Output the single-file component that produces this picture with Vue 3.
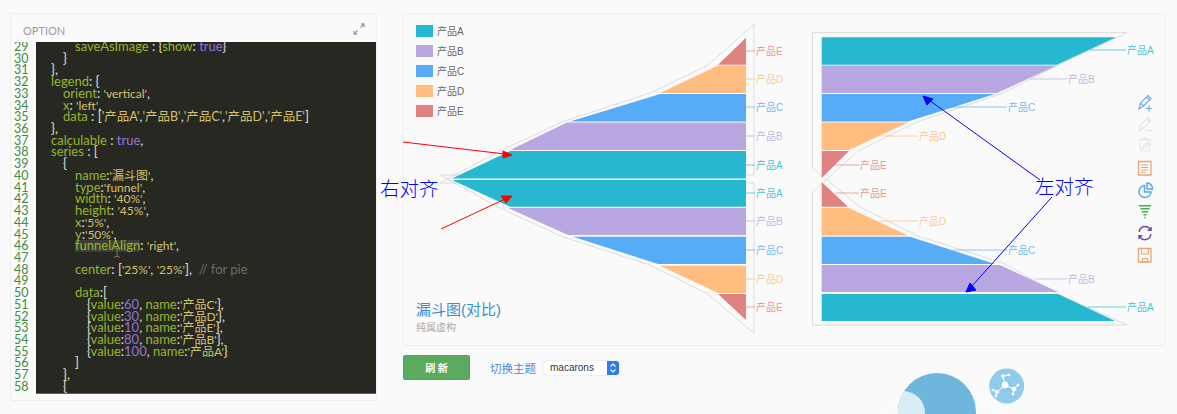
<script setup>
const kw = 'k', st = 's', pu = 'p', co = 'c', cm = 'm', cj = 'z'
const t = (cls, text) => ({ cls, text })
const item = (num, name, end = '},') => [t(pu, '{'), t(kw, 'value'), t(pu, ':'), t(co, num), t(pu, ', '), t(kw, 'name'), t(pu, ':'), t(st, `'${name}'`), t(pu, end)]
const codeLines = [
  [3, t(kw, 'saveAsImage'), t(pu, ' : {'), t(kw, 'show'), t(pu, ': '), t(co, 'true'), t(pu, '}')],
  [2, t(pu, '}')],
  [1, t(pu, '},')],
  [1, t(kw, 'legend'), t(pu, ': {')],
  [2, t(kw, 'orient'), t(pu, ': '), t(st, "'vertical'"), t(pu, ',')],
  [2, t(kw, 'x'), t(pu, ': '), t(st, "'left'"), t(pu, ',')],
  [2, t(kw, 'data'), t(pu, ' : ['), t(cj, "'产品A'"), t(pu, ','), t(cj, "'产品B'"), t(pu, ','), t(cj, "'产品C'"), t(pu, ','), t(cj, "'产品D'"), t(pu, ','), t(cj, "'产品E'"), t(pu, ']')],
  [1, t(pu, '},')],
  [1, t(kw, 'calculable'), t(pu, ' : '), t(co, 'true'), t(pu, ',')],
  [1, t(kw, 'series'), t(pu, ' : [')],
  [2, t(pu, '{')],
  [3, t(kw, 'name'), t(pu, ':'), t(st, "'漏斗图'"), t(pu, ',')],
  [3, t(kw, 'type'), t(pu, ':'), t(st, "'funnel'"), t(pu, ',')],
  [3, t(kw, 'width'), t(pu, ': '), t(st, "'40%'"), t(pu, ',')],
  [3, t(kw, 'height'), t(pu, ': '), t(st, "'45%'"), t(pu, ',')],
  [3, t(kw, 'x'), t(pu, ':'), t(st, "'5%'"), t(pu, ',')],
  [3, t(kw, 'y'), t(pu, ':'), t(st, "'50%'"), t(pu, ',')],
  [3, t('h', 'funnelAlign'), t(pu, ': '), t(st, "'right'"), t(pu, ',')],
  [3],
  [3, t(kw, 'center'), t(pu, ': ['), t(st, "'25%'"), t(pu, ', '), t(st, "'25%'"), t(pu, '],  '), t(cm, '// for pie')],
  [3],
  [3, t(kw, 'data'), t(pu, ':[')],
  [4, ...item('60', '产品C')],
  [4, ...item('30', '产品D')],
  [4, ...item('10', '产品E')],
  [4, ...item('80', '产品B')],
  [4, ...item('100', '产品A', '}')],
  [3, t(pu, ']')],
  [2, t(pu, '},')],
  [2, t(pu, '{')],
].map((l, i) => ({ n: 29 + i, indent: l[0], tokens: l.slice(1) }))

const A = '#26b8d0', B = '#b9a7e2', C = '#57acf7', D = '#ffbd80', E = '#e08280'
const legend = [['产品A', A], ['产品B', B], ['产品C', C], ['产品D', D], ['产品E', E]]
  .map(([name, color], i) => ({ name, color, y: 25 + i * 20 }))

const segments = [
  // right-aligned funnel
  [A, '510,151 746,151 746,178.5 452,178.5'],
  [B, '567,122.5 746,122.5 746,150 510,150'],
  [C, '660,94 746,94 746,121.5 570,121.5'],
  [D, '718,65.5 746,65.5 746,93 660,93'],
  [E, '746,37.7 746,64.7 718,64.7'],
  [A, '452,180 746,180 746,206.7 510,206.7'],
  [B, '508,208 746,208 746,235 568,235'],
  [C, '573,236.7 746,236.7 746,264 658,264'],
  [D, '660,265.7 746,265.7 746,293 718,293'],
  [E, '718,294 746,294 746,320'],
  // left-aligned funnel
  [A, '821.7,37.3 1116,37.3 1057,64.7 821.7,64.7'],
  [B, '821.7,65.5 1057,65.5 997,93 821.7,93'],
  [C, '821.7,94 995,94 908,121.5 821.7,121.5'],
  [D, '821.7,122.5 908,122.5 849,150 821.7,150'],
  [E, '821.7,151 849,151 821.7,178'],
  [E, '821.7,182 848,206.7 821.7,206.7'],
  [D, '821.7,208 849,208 908,235.5 821.7,235.5'],
  [C, '821.7,236.7 910,236.7 995,264 821.7,264'],
  [B, '821.7,265 1000,265 1058,292 821.7,292'],
  [A, '821.7,294 1058,294 1115,321 821.7,321'],
].map(([fill, points]) => ({ fill, points }))

const outlines = [
  '754,175 754,24 708,65 650,93 562,122 500,151 440,183 754,183',
  '754,183 754,333.5 708,294 650,265 562,236.5 500,208 440,175 754,175',
  '812.5,168 812.5,32.7 1127,32.7 1058,65 1003,93 917,122 858,151 812.5,192 812.5,325 1127,325 1058,294 1003,263 918,236 860,207 812.5,168',
]

const labels = [
  ['产品E', E, 746, 756, 51], ['产品D', D, 746, 756, 79], ['产品C', C, 746, 756, 107], ['产品B', B, 746, 756, 136], ['产品A', A, 746, 756, 165],
  ['产品A', A, 746, 756, 193], ['产品B', B, 746, 756, 221], ['产品C', C, 746, 756, 250], ['产品D', D, 746, 756, 279], ['产品E', E, 746, 756, 307],
  ['产品A', A, 1090, 1127, 50], ['产品B', B, 1030, 1068, 79], ['产品C', C, 950, 1008, 107], ['产品D', D, 880, 919, 136], ['产品E', E, 835, 860, 165],
  ['产品E', E, 835, 860, 193], ['产品D', D, 880, 919, 221], ['产品C', C, 953, 1008, 250], ['产品B', B, 1035, 1068, 279], ['产品A', A, 1088, 1127, 307],
].map(([name, color, x1, x2, y]) => ({ name, color, x1, x2, y }))
</script>

<template>
  <div class="page">
    <section class="option-card">
      <header class="option-head">
        <span class="option-title">OPTION</span>
        <svg class="expand" width="12" height="12" viewBox="0 0 12 12">
          <path d="M7.5 4.5 L11 1 M8 1 H11 V4 M4.5 7.5 L1 11 M1 8 V11 H4" fill="none" stroke="#a0a0a0" stroke-width="1.3" />
        </svg>
      </header>
      <div class="editor">
        <div class="gutter">
          <div v-for="l in codeLines" :key="l.n" class="num">{{ l.n }}</div>
        </div>
        <div class="code">
          <div v-for="l in codeLines" :key="l.n" class="line" :class="'lv' + l.indent">
            <span v-for="(tk, i) in l.tokens" :key="i" :class="tk.cls">{{ tk.text }}</span>
          </div>
          <svg class="cursor" width="8" height="11" viewBox="0 0 8 11">
            <path d="M1 1 H3 L4 2 L5 1 H7 M4 2 V9 M1 10 H3 L4 9 L5 10 H7" fill="none" stroke="#77776e" stroke-width="1" />
          </svg>
        </div>
      </div>
    </section>

    <div class="main">
      <section class="chart-card">
        <svg class="chart" width="762" height="333" viewBox="403 13 762 333">
          <polyline v-for="(o, i) in outlines" :key="i" :points="o" fill="none" stroke="#dcdcdc" stroke-width="1" />
          <polygon v-for="(s, i) in segments" :key="i" :points="s.points" :fill="s.fill" />
          <g v-for="(l, i) in labels" :key="i">
            <line :x1="l.x1" :x2="l.x2 - 1" :y1="l.y" :y2="l.y" :stroke="l.color" stroke-opacity="0.65" stroke-width="1" />
            <text :x="l.x2" :y="l.y + 3.5" :fill="l.color" fill-opacity="0.85" class="label">{{ l.name }}</text>
          </g>
          <g v-for="l in legend" :key="l.name">
            <rect x="416" :y="l.y" width="17" height="12" :fill="l.color" />
            <text x="437" :y="l.y + 9.5" class="legend">{{ l.name }}</text>
          </g>
          <text x="416" y="315" class="title">漏斗图(对比)</text>
          <text x="416" y="331" class="subtitle">纯属虚构</text>

          <!-- toolbox -->
          <g fill="none" stroke-width="1.1">
            <g stroke="#6aa9ef">
              <path d="M1139 109 L1140.5 103 L1148 95.5 L1151 98.5 L1143.5 106 Z M1146.5 97 L1149.5 100 M1140.5 103 L1143.5 106" />
              <path d="M1146 108.5 H1152 M1149 105.5 V111.5" stroke-width="1.2" />
            </g>
            <g stroke="#e4e4e4">
              <path d="M1139 131 L1140.5 125 L1148 117.5 L1151 120.5 L1143.5 128 Z M1146.5 119 L1149.5 122" />
              <path d="M1146 130.5 H1152" />
              <path d="M1138 140 H1152 M1142 140 V138.5 H1148 V140 M1139.5 142 L1141 151 H1149 L1150.5 142 M1142.5 148.5 L1143.5 146 L1147.5 142.5 L1149 144 L1145 147.8 Z" />
            </g>
            <g stroke="#e8a878">
              <path d="M1138.5 161.5 H1151 V175 H1138.5 Z" stroke-width="1.3" />
              <path d="M1141 165 H1148.5 M1141 167.5 H1148.5 M1141 170 H1148.5 M1141 172.2 H1145.5" />
            </g>
            <g stroke="#5ba4f2" stroke-width="1.5">
              <path d="M1144.5 185.5 A6 6 0 1 0 1151 192 H1144.5 Z" />
              <path d="M1147 183 A5.5 5.5 0 0 1 1152.5 189 H1147 Z" />
            </g>
            <g stroke="#3eb24a" stroke-width="1.6">
              <path d="M1139 205.8 H1151 M1140.5 208.8 H1149.5 M1142 211.8 H1148 M1143.5 214.8 H1146.5 M1144.4 217.6 H1145.6" />
            </g>
            <g stroke="#6d4ba8" stroke-width="1.5">
              <path d="M1139.3 232 A5.8 5.8 0 0 1 1149.5 228.5 L1150.5 229.8 M1151 227 V230.2 H1147.6" />
              <path d="M1150.8 234 A5.8 5.8 0 0 1 1140.5 237.5 L1139.5 236.2 M1139 239 V235.8 H1142.4" />
            </g>
            <g stroke="#e8a878">
              <path d="M1138.5 248.5 H1151 V262 H1138.5 Z" stroke-width="1.3" />
              <path d="M1141.5 248.5 V254 H1148.5 V248.5 M1142.5 258.5 H1147.5 V262 H1142.5 Z" />
            </g>
          </g>
        </svg>
      </section>

      <div class="controls">
        <button class="refresh">刷 新</button>
        <span class="theme-label">切换主题</span>
        <div class="select">
          <span class="select-text">macarons</span>
          <span class="select-arrow">
            <svg width="8" height="12" viewBox="0 0 8 12">
              <path d="M1.5 4.5 L4 2 L6.5 4.5 M1.5 7.5 L4 10 L6.5 7.5" fill="none" stroke="#fff" stroke-width="1.1" />
            </svg>
          </span>
        </div>
      </div>
    </div>

    <!-- hand-drawn annotations and the floating bubble lie over the page -->
    <svg class="overlay" width="1177" height="414" viewBox="0 0 1177 414">
      <g stroke="#fff" stroke-opacity="0.8" fill="none">
        <path d="M880 414 L900 400 M976 397 L1002 414" />
      </g>
      <circle cx="937" cy="412" r="39" fill="#6fb6dc" />
      <clipPath id="bubble"><circle cx="937" cy="412" r="39" /></clipPath>
      <circle cx="903" cy="413" r="22" fill="#d9edf6" clip-path="url(#bubble)" />
      <circle cx="1006.7" cy="386" r="17.5" fill="#8ecbec" />
      <g stroke="#fff" stroke-width="1" fill="#fff">
        <path d="M1005 385 L1003 376 L1009 375 M1005 385 L997 392 L996 396 M997 392 L993 390 M1005 385 L1014 389 L1018 385 M1014 389 L1013 394" fill="none" />
        <circle cx="1005" cy="385" r="3" /><circle cx="1003" cy="376" r="1.5" /><circle cx="1009" cy="375" r="1" />
        <circle cx="997" cy="392" r="1.5" /><circle cx="996" cy="396" r="1" /><circle cx="993" cy="390" r="1" />
        <circle cx="1014" cy="389" r="2" /><circle cx="1018" cy="385" r="1" /><circle cx="1013" cy="394" r="1" />
      </g>

      <g fill="#f00" stroke="#f00">
        <line x1="403" y1="142" x2="505" y2="154" />
        <polygon points="512,155 503,151 503,158" />
        <line x1="441" y1="229" x2="505" y2="199" />
        <polygon points="512,196 501,196 506,203" />
      </g>
      <g fill="#00f" stroke="#00f">
        <line x1="1040" y1="180" x2="929" y2="100" />
        <polygon points="923,96 933,99 927,105" />
        <line x1="1052" y1="197" x2="972" y2="286" />
        <polygon points="966,292 970,283 976,290" />
      </g>
      <text x="380" y="196" class="note">右对齐</text>
      <text x="1035" y="194" class="note">左对齐</text>
    </svg>
  </div>
</template>

<style scoped>
.page {
  position: relative;
  display: flex;
  gap: 26px;
  width: 1177px;
  height: 414px;
  padding: 13px 12px 0 10px;
  box-sizing: border-box;
  overflow: hidden;
  background: #fafafa;
  font-family: "Lato", "Noto Sans CJK SC", sans-serif;
}
.option-card {
  width: 367px;
  height: 388px;
  box-sizing: border-box;
  border: 1px solid #eeeeee;
  border-radius: 3px;
  display: flex;
  flex-direction: column;
  background: #fafafa;
}
.option-head {
  height: 28px;
  flex: none;
  display: flex;
  align-items: center;
  justify-content: space-between;
  padding: 4px 11px 0 12px;
  box-sizing: border-box;
}
.option-title {
  font-size: 11px;
  color: #9a9a9a;
}
.expand {
  margin-bottom: 3px;
}
.editor {
  display: flex;
  height: 351.5px;
  flex: none;
  overflow: hidden;
}
.gutter {
  width: 25px;
  flex: none;
  background: #fafafa;
  margin-top: -1px;
}
.num {
  height: 11.72px;
  line-height: 11.72px;
  font-size: 12.5px;
  color: #3f8c45;
  padding-left: 3px;
}
.code {
  position: relative;
  flex: 1;
  background: #272822;
  border-bottom: 1px solid #666;
  overflow: hidden;
}
.line {
  height: 11.72px;
  line-height: 11.72px;
  font-size: 13px;
  white-space: pre;
  position: relative;
  top: -1px;
}
.lv1 { padding-left: 15px; }
.lv2 { padding-left: 27px; }
.lv3 { padding-left: 39px; }
.lv4 { padding-left: 51px; }
.k { color: #95b62f; }
.s { color: #d3c26d; font-size: 12px; }
.z { color: #d3c26d; font-size: 12.5px; }
.p { color: #e0e0d8; }
.c { color: #8f76dc; }
.m { color: #6f6d60; }
.h {
  display: inline-block;
  height: 11.72px;
  color: #95b62f;
  background: #3d3f36;
}
.cursor {
  position: absolute;
  left: 77px;
  top: 205px;
}
.main {
  width: 762px;
  display: flex;
  flex-direction: column;
}
.chart-card {
  height: 333px;
  box-sizing: border-box;
  border: 1px solid #eeeeee;
  border-radius: 3px;
  overflow: hidden;
}
.chart {
  display: block;
  margin: -1px;
  overflow: visible;
}
.label, .legend {
  font-family: "Liberation Sans", "Noto Sans CJK SC", sans-serif;
  font-size: 10px;
}
.legend {
  fill: #666;
}
.title {
  font-family: "Liberation Sans", "Noto Sans CJK SC", sans-serif;
  font-size: 15px;
  fill: #3a8fcf;
}
.subtitle {
  font-family: "Noto Sans CJK SC", sans-serif;
  font-size: 10px;
  fill: #aaaaaa;
}
.controls {
  margin-top: 9px;
  display: flex;
  align-items: center;
  height: 25px;
}
.refresh {
  width: 67px;
  height: 25px;
  padding: 0;
  border: 1px solid #55a358;
  border-radius: 2px;
  background: #5bab5f;
  color: #fff;
  font-family: "Noto Sans CJK SC", sans-serif;
  font-size: 10px;
  font-weight: 700;
}
.theme-label {
  margin-left: 20px;
  font-family: "Noto Sans CJK SC", sans-serif;
  font-size: 11.5px;
  color: #4d8fd0;
}
.select {
  margin-left: 8px;
  width: 75px;
  height: 14px;
  display: flex;
  justify-content: space-between;
  align-items: center;
  background: #fff;
  border-radius: 3px;
  box-shadow: 0 0 1px #999;
  overflow: hidden;
}
.select-text {
  padding-left: 6px;
  font-family: "Liberation Sans", sans-serif;
  font-size: 10px;
  color: #333;
}
.select-arrow {
  width: 12px;
  height: 14px;
  display: flex;
  align-items: center;
  justify-content: center;
  background: #2f7de8;
}
.overlay {
  position: absolute;
  left: 0;
  top: 0;
  pointer-events: none;
}
.note {
  font-family: "Noto Sans CJK SC", sans-serif;
  font-weight: 300;
  font-size: 19.5px;
  fill: #0000ff;
}
</style>
